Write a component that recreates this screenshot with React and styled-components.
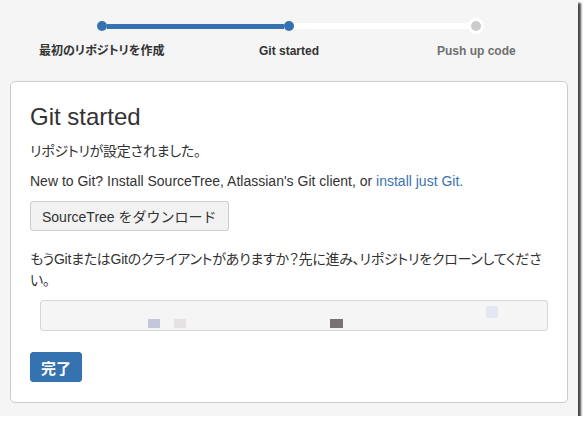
import React from 'react';
import styled, { createGlobalStyle } from 'styled-components';

const Global = createGlobalStyle`
  body {
    margin: 0;
    background: #ffffff;
    font-family: "Liberation Sans", Arial, "Noto Sans CJK JP", sans-serif;
    color: #333333;
  }
`;

const steps = [
  { label: '最初のリポジトリを作成', state: 'done' },
  { label: 'Git started', state: 'current' },
  { label: 'Push up code', state: 'todo' },
];

// blurred-out clone url, kept as a few mosaic blocks
const mosaic = [
  { gap: 107, top: 18, w: 12, h: 9, color: '#c4c7da' },
  { gap: 14, top: 18, w: 12, h: 9, color: '#e4e2e2' },
  { gap: 144, top: 18, w: 13, h: 9, color: '#797274' },
  { gap: 143, top: 5, w: 12, h: 12, color: '#e4e7f1' },
];

function App() {
  return (
    <>
      <Global />
      <Frame>
        <Stepper>
          {steps.map((step, i) => (
            <Step key={step.label}>
              <Track>
                <Line
                  $hidden={i === 0}
                  $tone={step.state === 'todo' ? 'track' : 'fill'}
                />
                <Dot $state={step.state} />
                <Line
                  $hidden={i === steps.length - 1}
                  $tone={steps[i + 1] && steps[i + 1].state !== 'todo' ? 'fill' : 'track'}
                />
              </Track>
              <StepLabel $muted={step.state === 'todo'}>{step.label}</StepLabel>
            </Step>
          ))}
        </Stepper>

        <Card>
          <Title>Git started</Title>
          <Text $gap={10} $jp>リポジトリが設定されました。</Text>
          <Text $gap={9}>
            New to Git? Install SourceTree, Atlassian's Git client, or{' '}
            <TextLink href="#">install just Git.</TextLink>
          </Text>
          <ButtonRow>
            <Button>SourceTree をダウンロード</Button>
          </ButtonRow>
          <Text $gap={18} $jp>
            もうGitまたはGitのクライアントがありますか？先に進み、リポジトリをクローンしてください。
          </Text>
          <CloneBox>
            {mosaic.map((p, i) => (
              <Pixel key={i} $gap={p.gap} $top={p.top} $w={p.w} $h={p.h} $color={p.color} />
            ))}
          </CloneBox>
          <PrimaryButton>完了</PrimaryButton>
        </Card>
      </Frame>
    </>
  );
}

export default App;

const Frame = styled.div`
  width: 578px;
  height: 416px;
  box-sizing: border-box;
  background: #f5f5f5;
  padding: 21px 10px 0;
  box-shadow: 3px 3px 2px rgba(40, 40, 40, 0.85);
`;

const Stepper = styled.div`
  display: grid;
  grid-template-columns: repeat(3, 1fr);
  margin: 0 -2px;
`;

const Step = styled.div`
  display: flex;
  flex-direction: column;
  align-items: stretch;
`;

const Track = styled.div`
  display: flex;
  align-items: center;
  height: 10px;
`;

const Line = styled.div`
  flex: 1;
  height: ${(p) => (p.$tone === 'fill' ? '5px' : '6px')};
  background: ${(p) => (p.$hidden ? 'transparent' : p.$tone === 'fill' ? '#3572b0' : '#ffffff')};
`;

const Dot = styled.div`
  width: 10px;
  height: 10px;
  border-radius: 50%;
  flex: none;
  background: ${(p) => (p.$state === 'todo' ? '#cccccc' : '#3572b0')};
  box-shadow: ${(p) => (p.$state === 'todo' ? '0 0 0 3px #ffffff' : 'none')};
`;

const StepLabel = styled.div`
  margin-top: 12px;
  text-align: center;
  font-size: 12px;
  line-height: 16px;
  font-weight: bold;
  font-feature-settings: "palt";
  color: ${(p) => (p.$muted ? '#707070' : '#333333')};
`;

const Card = styled.div`
  margin-top: 22px;
  background: #ffffff;
  border: 1px solid #cccccc;
  border-radius: 5px;
  padding: 21px 19px 20px;
`;

const Title = styled.h1`
  margin: 0;
  font-size: 24px;
  line-height: 28px;
  font-weight: normal;
  color: #333333;
`;

const Text = styled.p`
  margin: ${(p) => p.$gap}px 0 0;
  font-size: 14px;
  line-height: 20.5px;
  letter-spacing: ${(p) => (p.$jp ? '-0.25px' : 'normal')};
  font-feature-settings: "palt";
  color: #333333;
`;

const TextLink = styled.a`
  color: #3b73af;
  text-decoration: none;
`;

const ButtonRow = styled.div`
  margin-top: 10px;
  display: flex;
`;

const Button = styled.button`
  height: 30px;
  padding: 0 11px;
  font-family: inherit;
  font-size: 14px;
  color: #333333;
  background: #f2f2f2;
  border: 1px solid #cccccc;
  border-radius: 3px;
`;

const CloneBox = styled.div`
  margin: 10px 0 0 10px;
  height: 31px;
  box-sizing: border-box;
  display: flex;
  align-items: flex-start;
  background: #f5f5f5;
  border: 1px solid #d6d6d6;
  border-radius: 3px;
`;

const Pixel = styled.span`
  flex: none;
  margin-left: ${(p) => p.$gap}px;
  margin-top: ${(p) => p.$top}px;
  width: ${(p) => p.$w}px;
  height: ${(p) => p.$h}px;
  background: ${(p) => p.$color};
`;

const PrimaryButton = styled.button`
  display: block;
  margin-top: 21px;
  height: 30px;
  padding: 0 10px;
  font-family: inherit;
  font-size: 15px;
  font-weight: bold;
  color: #ffffff;
  background: #3572b0;
  border: 1px solid #3572b0;
  border-radius: 3px;
`;
